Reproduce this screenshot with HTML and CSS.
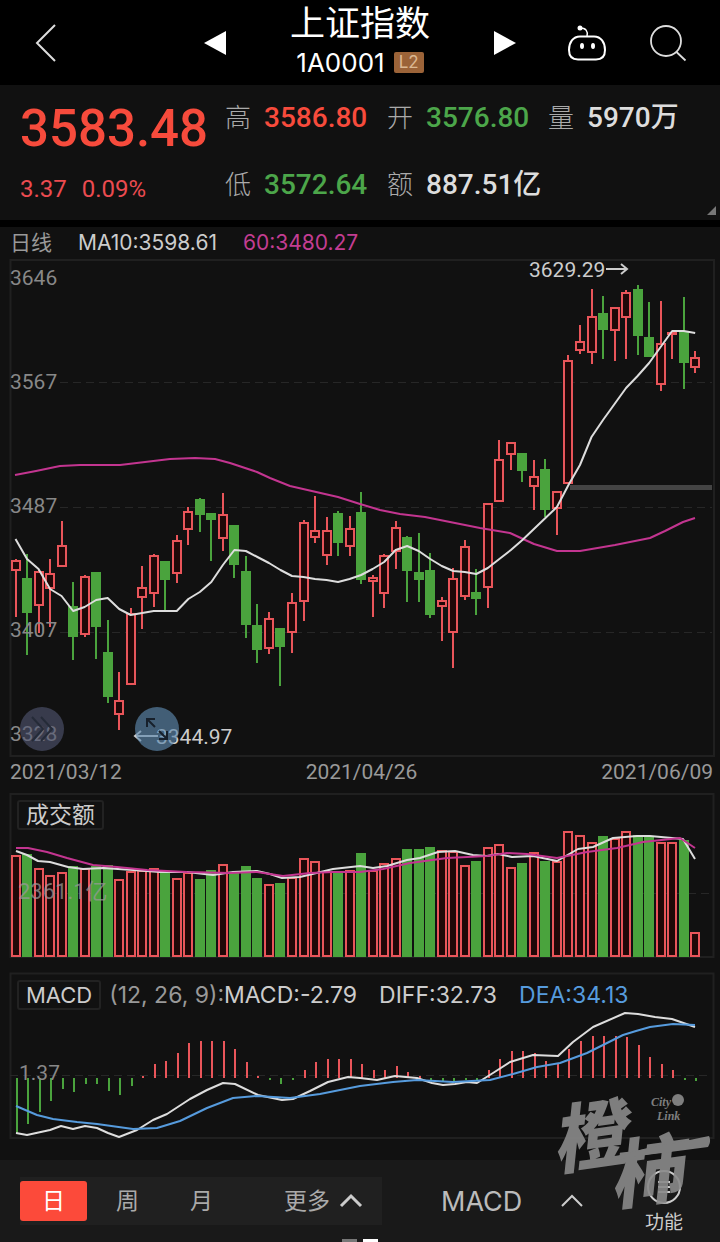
FILE: index.html
```html
<!DOCTYPE html>
<html lang="zh-CN">
<head>
<meta charset="utf-8">
<meta name="viewport" content="width=device-width, initial-scale=1">
<title>上证指数 1A0001</title>
<link rel="stylesheet" href="styles.css">
</head>
<body>
<header class="topbar">
  <button class="icon-btn back" aria-label="返回"><svg width="24" height="40" viewBox="0 0 24 40"><path d="M21 2 3 20 21 38" fill="none" stroke="#ddd" stroke-width="2"/></svg></button>
  <div class="switcher">
    <button class="icon-btn" aria-label="上一个"><svg width="22" height="24" viewBox="0 0 22 24"><path d="M22 0v24L0 12z" fill="#fff"/></svg></button>
    <div class="heading">
      <h1 class="name">上证指数</h1>
      <p class="code">1A0001 <span class="level">L2</span></p>
    </div>
    <button class="icon-btn" aria-label="下一个"><svg width="22" height="24" viewBox="0 0 22 24"><path d="M0 0v24l22-12z" fill="#fff"/></svg></button>
  </div>
  <div class="tools">
    <button class="icon-btn" aria-label="智能助手"><svg width="40" height="38" viewBox="0 0 40 38"><g fill="none" stroke="#fff" stroke-width="2"><path d="M13 12.500h14c7 0 11 6 11 13.500 0 7-3 9.500-9 9.500H11c-6 0-9-2.500-9-9.500 0-7.500 4-13.500 11-13.500z"/><path d="M20 12c1-5-1-8-7-8" stroke-width="1.500"/></g><circle cx="13" cy="4" r="2.500" fill="#fff"/><ellipse cx="15" cy="22" rx="2" ry="3" fill="#fff"/><ellipse cx="26" cy="22" rx="2" ry="3" fill="#fff"/></svg></button>
    <button class="icon-btn" aria-label="搜索"><svg width="38" height="38" viewBox="0 0 38 38"><g fill="none" stroke="#ddd" stroke-width="1.800"><circle cx="17" cy="17" r="15"/><path d="m27.500 28 9 8.500"/></g></svg></button>
  </div>
</header>

<main>
<section class="quote">
  <div class="last">
    <strong class="price">3583.48</strong>
    <p class="change"><span>3.37</span><span>0.09%</span></p>
  </div>
  <dl class="stats">
    <div class="stat"><dt>高</dt><dd class="up">3586.80</dd></div>
    <div class="stat"><dt>开</dt><dd class="down">3576.80</dd></div>
    <div class="stat"><dt>量</dt><dd>5970万</dd></div>
    <div class="stat"><dt>低</dt><dd class="down">3572.64</dd></div>
    <div class="stat"><dt>额</dt><dd>887.51亿</dd></div>
  </dl>
  <span class="corner"></span>
</section>

<section class="charts">
  <p class="legend"><span class="period">日线</span><span>MA10:3598.61</span><span class="pink">60:3480.27</span></p>
  <div class="plot">
    <svg id="price" class="canvas" viewBox="0 259 720 498" role="img" aria-label="日K线图">
      <path class="frame" d="M10.500 260H714V756H10.500z"/>
      <path class="grid" d="M60 382.500H712M60 507.500H712M60 632.500H712"/>
      <path class="gap" d="M570 487.500H712"/>
      <g id="candles"></g>
      <polyline class="ma-pink" points="15,475 36,471 60,466 80,465 120,465 145,462 170,459 195,458 215,459 230,463 257,472 270,478 290,486 338,497 360,504 380,510 400,514 425,517 455,523 480,528 510,533 534,544 557,551 580,551 615,545 650,538 665,531 683,522 695,518"/>
      <polyline id="ma10" class="ma-white"/>
      <g class="axis"><text x="10" y="285">3646</text><text x="10" y="389">3567</text><text x="10" y="513">3487</text><text x="10" y="637">3407</text><text x="10" y="741">3328</text></g>
      <g class="mark"><text x="529" y="277">3629.29</text><path d="M606 269h21m-6-5 6 5-6 5"/><text x="156" y="744">3344.97</text><path d="M158 736h-23m6-5-6 5 6 5"/></g>
    </svg>
    <button class="round round-skip" aria-label="快进"><svg width="26" height="28" viewBox="0 0 26 28"><path d="m3 2 11 12L3 26M12 2l11 12-11 12" fill="none" stroke="#252b38" stroke-width="2"/></svg></button>
    <button class="round round-full" aria-label="全屏"><svg width="24" height="24" viewBox="0 0 24 24"><path d="M10 10 2 2m0 8V2h8M14 14l8 8m0-8v8h-8" fill="none" stroke="#17202b" stroke-width="2"/></svg></button>
  </div>
  <p class="dates"><time>2021/03/12</time><time>2021/04/26</time><time>2021/06/09</time></p>

  <div class="plot volume">
    <button class="tag">成交额</button>
    <svg class="canvas" viewBox="0 793 720 165" role="img" aria-label="成交额">
      <path class="frame" d="M10.500 794H713.500V957H10.500z"/>
      <path class="grid" d="M12 893.500H712"/>
      <g id="bars"></g>
      <polyline class="ma-white" points="16,851 27,855 38,861 50,862 68,867 83,869 103,868 133,870 160,872 187,872 213,875 233,872 257,871 270,874 282,878 300,877 333,869 360,866 373,868 387,866 407,860 420,858 438,852 455,851 473,855 487,856 498,854 512,857 533,856 557,861 578,849 593,847 613,838 637,836 650,836 683,839 695,859"/>
      <polyline class="ma-pink" points="16,848 28,848 47,852 67,858 93,865 117,867 147,870 187,872 230,873 257,872 283,876 310,873 333,872 360,872 383,869 410,863 447,858 487,856 507,853 527,854 557,858 587,852 617,848 643,842 680,838 695,848"/>
      <text class="axis faint" x="18" y="899">2361.1亿</text>
    </svg>
  </div>

  <div class="plot macd">
    <p class="indicator"><button class="tag">MACD</button><span class="params">(12, 26, 9):</span><span class="value">MACD:-2.79</span><span class="value diff">DIFF:32.73</span><span class="value dea">DEA:34.13</span></p>
    <svg class="canvas" viewBox="0 973 720 167" role="img" aria-label="MACD">
      <path class="frame" d="M10.500 973.500H713.500V1138H10.500z"/>
      <path class="grid" d="M10 1075.500H712"/>
      <g id="histogram"></g>
      <text class="axis" x="19" y="1080">1.37</text>
      <polyline class="ma-white" points="16,1133 27,1135 50,1130 61,1126 73,1129 85,1126 97,1128 108,1133 119,1137 137,1130 153,1120 167,1114 190,1099 207,1090 223,1083 235,1084 258,1095 282,1100 293,1099 310,1091 328,1082 348,1077 360,1078 377,1080 395,1076 417,1078 432,1083 443,1085 455,1084 467,1082 477,1083 493,1073 510,1062 533,1055 558,1056 573,1042 593,1027 625,1013 638,1014 655,1017 672,1019 695,1027"/>
      <polyline class="ma-blue" points="16,1106 37,1115 53,1119 77,1122 97,1124 133,1129 157,1128 180,1121 207,1108 233,1098 257,1096 290,1098 320,1094 360,1086 393,1082 417,1080 453,1082 490,1080 513,1074 537,1067 560,1063 587,1053 605,1044 623,1035 636,1031 650,1027 673,1024 695,1025"/>
    </svg>
  </div>
</section>
</main>

<footer class="toolbar">
  <div class="periods">
    <button class="period-btn active">日</button>
    <button class="period-btn">周</button>
    <button class="period-btn">月</button>
    <button class="period-btn more">更多<svg width="24" height="14" viewBox="0 0 24 14"><path d="M2 12 12 2l10 10" fill="none" stroke="#ccc" stroke-width="3"/></svg></button>
  </div>
  <button class="select-macd">MACD<svg width="24" height="14" viewBox="0 0 24 14"><path d="M2 12 12 2l10 10" fill="none" stroke="#ccc" stroke-width="2"/></svg></button>
  <button class="func"><svg width="36" height="36" viewBox="0 0 36 36"><g fill="none" stroke="#ccc" stroke-width="2"><circle cx="18" cy="18" r="16"/><path d="M12 13h12M12 18h12M12 23h12"/></g></svg>功能</button>
  <span class="pager"><i></i><i class="on"></i></span>
  <svg class="watermark" width="170" height="136" viewBox="0 0 170 136" role="img" aria-label="橙柿 City Link">
    <g transform="rotate(-8 80 60)"><text class="brand" x="3" y="69">橙</text><text class="brand" x="55" y="112">柿</text></g>
    <path d="M32 80c34-14 66-22 88-25l39-8c2 4 1 8-1 11l-38 5c-26 3-55 7-88 17z"/>
    <circle cx="128" cy="11" r="6"/>
    <text class="city" x="101" y="17">City</text><text class="city" x="107" y="31">Link</text>
  </svg>
</footer>
<script src="chart.js"></script>
</body>
</html>
```
FILE: styles.css
```css
* { box-sizing: border-box; }
body, h1, p, dl, dd { margin: 0; }
body {
  min-height: 100vh;
  background: #111;
  color: #ccc;
  font-family: Inter, "Noto Sans CJK SC", sans-serif;
}
button { border: 0; padding: 0; background: none; color: inherit; font: inherit; cursor: pointer; }
svg { display: block; overflow: visible; }

.topbar {
  display: grid;
  grid-template-columns: 1fr auto 1fr;
  align-items: center;
  height: 85px;
  background: #000;
  color: #fff;
}
.back { justify-self: start; padding-left: 34px; }
.switcher { display: flex; align-items: center; justify-content: space-between; width: 312px; }
.heading { padding-bottom: 4px; text-align: center; }
.name { font-size: 35px; font-weight: 400; line-height: 44px; }
.code { display: flex; align-items: center; justify-content: center; gap: 9px; font-size: 26px; line-height: 36px; }
.level { padding: 0 5px; background: #9b6338; color: #dcb892; border-radius: 2px; font-size: 17px; line-height: 21px; }
.tools { display: flex; align-items: center; justify-content: flex-end; gap: 42px; padding-right: 33px; }

.quote {
  position: relative;
  display: grid;
  grid-template-columns: 205px 1fr;
  padding: 10px 20px;
  height: 142px;
  border-bottom: 7px solid #000;
  font-family: Roboto, "Noto Sans CJK SC", sans-serif;
}
.price { display: block; color: #f74b3c; font-size: 51px; font-weight: 500; line-height: 68px; }
.change { display: flex; gap: 15px; color: #eb4b50; font-size: 24px; line-height: 52px; }
.stats { display: grid; grid-template-columns: 162px 161px auto; grid-template-rows: 46px 67px; align-items: end; justify-content: start; }
.stat { display: flex; gap: 13px; align-items: center; line-height: 46px; }
.stat dt { color: #aaa; font-size: 26px; font-weight: 300; }
.stat dd { color: #ddd; font-size: 28px; font-weight: 500; }
.stat .up { color: #f74b3c; }
.stat .down { color: #4ca64a; }
.corner { position: absolute; right: 4px; bottom: 5px; border-left: 9px solid transparent; border-bottom: 9px solid #777; }

.legend { display: flex; gap: 26px; padding: 0 10px; font-size: 21px; line-height: 32px; }
.period { color: #999; }
.pink { color: #c33d92; }
.plot { position: relative; }
.canvas { width: 100%; height: auto; }
.dates {
  display: flex;
  justify-content: space-between;
  padding: 0 7px 0 10px;
  margin-bottom: 6px;
  color: #999;
  font: 21px/30px Roboto, sans-serif;
}
.volume { margin-bottom: 15px; }
.tag {
  border: 2px solid #222;
  border-radius: 3px;
  padding: 0 7px;
  color: #ccc;
  font-size: 22px;
  line-height: 26px;
}
.volume .tag { position: absolute; left: 17px; top: 7px; font-size: 23px; }
.indicator { position: absolute; left: 17px; top: 7px; display: flex; align-items: center; font-size: 23px; line-height: 30px; }
.params { margin-left: 8px; color: #999; }
.diff, .dea { margin-left: 22px; }
.dea { color: #569bdd; }

.frame { fill: none; stroke: #202020; stroke-width: 2; }
.grid { stroke: #272727; stroke-width: 1; stroke-dasharray: 8 5; }
.gap { stroke: #444; stroke-width: 5; }
.ma-white, .ma-pink, .ma-blue { fill: none; stroke-width: 2; stroke-linejoin: round; }
.ma-white { stroke: #ddd; }
.ma-pink { stroke: #c33590; }
.ma-blue { stroke: #569bdd; }
.axis { fill: #888; font: 21px Roboto, "Noto Sans CJK SC", sans-serif; }
.faint { fill: #999b; font-size: 22px; }
.mark { fill: #ccc; stroke: none; font: 21px Roboto, sans-serif; }
.mark path { fill: none; stroke: #ccc; stroke-width: 2; }
.rise { fill: #200808; stroke: #e9555a; stroke-width: 2; }
.fall { fill: #4aa33d; stroke: #4aa33d; stroke-width: 2; }

.round {
  position: absolute;
  bottom: 6px;
  display: grid;
  place-items: center;
  width: 44px;
  height: 44px;
  border-radius: 50%;
}
.round-skip { left: 20px; background: rgba(83, 89, 117, .6); }
.round-full { left: 135px; background: rgba(93, 136, 174, .65); }

.toolbar {
  position: relative;
  display: flex;
  align-items: center;
  margin-top: 20px;
  padding: 0 37px 0 20px;
  height: 82px;
  background: #191919;
}
.periods { display: flex; width: 362px; height: 48px; align-items: center; background: #202020; }
.period-btn { width: 67px; height: 40px; margin-right: 7px; border-radius: 3px; color: #aaa; font-size: 23px; line-height: 40px; }
.active { background: #fc4a3a; color: #fff; }
.more { display: flex; align-items: center; gap: 9px; width: auto; margin: 0 0 0 auto; padding-right: 19px; }
.select-macd { display: flex; align-items: center; gap: 38px; margin-left: 59px; font-size: 27px; color: #bbb; }
.func { display: grid; justify-items: center; gap: 4px; margin-left: auto; padding-top: 4px; color: #ccc; font-size: 19px; line-height: 28px; }
.pager { position: absolute; left: 0; right: 0; bottom: 0; display: flex; justify-content: center; gap: 6px; }
.pager i { width: 15px; height: 3px; background: #777; }
.pager .on { background: #fff; }
.watermark { position: absolute; right: 0; bottom: 17px; fill: #8a8a8a; opacity: .9; pointer-events: none; }
.brand { font: italic 900 74px "Noto Sans CJK SC", sans-serif; }
.city { font: italic 700 12px "Liberation Serif", serif; }
```
FILE: chart.js
```javascript
const STEP = 11.52;
const centre = i => 15.5 + i * STEP;

// direction, high, body top, body bottom, low
const candles = `r 559 560 571 617|g 554 578 613 655|r 570 571 606 633|r 559 573 589 627|r 521 545 567 567
g 582 606 637 660|r 575 576 635 637|g 572 572 627 659|g 620 652 697 703|r 672 700 715 730
r 608 613 685 685|r 566 587 598 629|r 554 555 594 607|g 561 561 580 610|r 535 540 574 583
r 507 511 530 545|g 498 499 515 532|g 513 513 520 561|r 493 514 539 551|g 525 525 565 578
g 556 571 625 638|g 604 625 650 663|r 612 618 649 654|g 628 628 647 686|r 593 602 633 653
r 520 522 602 621|r 496 530 538 543|r 517 530 556 565|g 511 513 543 556|r 516 528 547 556
g 492 512 580 584|r 575 577 582 617|r 554 555 594 608|r 521 527 552 569|g 536 537 571 602
g 533 572 580 602|g 553 570 615 618|r 597 600 607 641|r 568 578 633 668|r 540 546 597 600
g 569 592 599 615|r 503 503 588 608|r 440 459 502 502|r 442 442 455 470|g 453 453 471 482
r 460 476 487 510|g 459 469 510 517|r 491 491 509 535|r 355 360 484 484|r 325 341 351 354
r 289 316 353 364|g 296 313 330 359|r 307 307 331 361|r 290 292 318 359|g 285 289 336 355
g 302 337 357 357|r 301 343 385 391|r 331 332 335 359|g 297 332 363 389|r 351 357 368 373`
  .split(/[|\n]/).map(row => {
    const [dir, ...v] = row.trim().split(' ');
    return [dir === 'r' ? 'rise' : 'fall', ...v.map(Number)];
  });

const turnover = [855,854,868,875,872,866,868,866,865,879,871,870,868,872,878,872,879,870,864,873,
  866,878,884,883,877,858,861,871,873,870,853,870,863,858,849,849,847,850,851,865,
  861,847,844,867,863,852,861,861,831,835,842,836,838,831,835,836,842,842,840,932];

const macd = [1134,1124,1112,1101,1089,1092,1084,1084,1091,1095,1086,1076,1064,1061,1053,1043,1041,1041,1041,1049,
  1062,1076,1080,1084,1080,1070,1062,1059,1059,1059,1064,1070,1070,1066,1072,1076,1080,1081,1081,1080,
  1080,1070,1059,1051,1051,1053,1061,1063,1049,1041,1036,1036,1036,1037,1045,1057,1064,1070,1080,1081];

const ma10 = [539,559,569,589,596,611,607,600,598,609,615,613,611,611,611,599,592,582,565,550,
  551,557,563,570,576,577,579,580,582,579,575,569,562,550,546,551,559,566,571,572,
  574,568,559,550,540,529,518,507,485,465,437,420,404,388,376,363,347,331,331,333];

const box = (cls, x, top, bottom) =>
  `<rect class="${cls}" x="${x - 4}" y="${top + 1}" width="8" height="${Math.max(1, bottom - top - 2)}"/>`;

document.getElementById('candles').innerHTML = candles.map(([cls, high, top, bottom, low], i) => {
  const x = Math.round(centre(i));
  return `<path class="${cls}" d="M${x} ${high}V${top}M${x} ${bottom}V${low}"/>` + box(cls, x, top, bottom);
}).join('');

document.getElementById('bars').innerHTML =
  turnover.map((top, i) => box(candles[i][0], Math.round(centre(i)), top, 957)).join('');

document.getElementById('histogram').innerHTML = macd.map((y, i) =>
  `<path class="${y < 1078 ? 'rise' : 'fall'}" d="M${Math.round(centre(i) + 1)} 1078V${y}"/>`).join('');

document.getElementById('ma10').setAttribute('points', ma10.map((y, i) => `${centre(i)},${y}`).join(' '));
```
